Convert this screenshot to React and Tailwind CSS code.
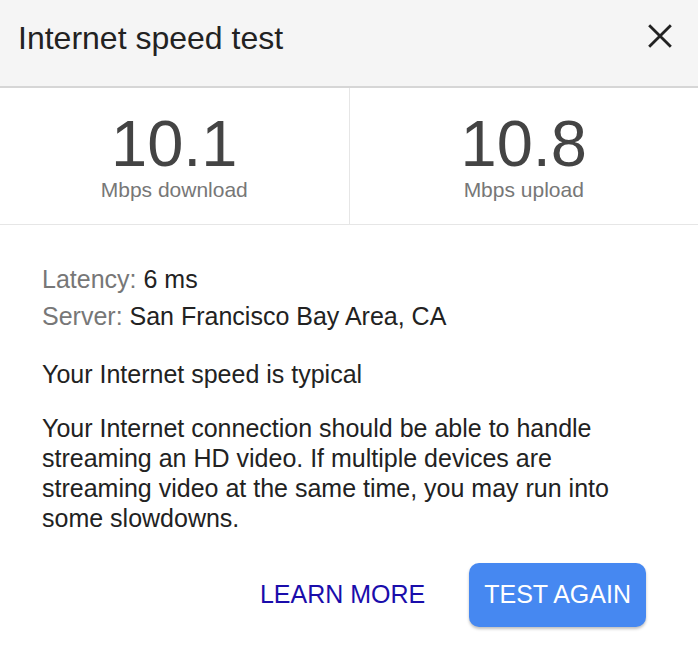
import React from 'react';

const Stat = ({ value, label, border }) => (
  <div className={`flex-1 flex flex-col items-center pt-[22px] ${border ? 'border-r border-[#e6e6e6]' : ''}`}>
    <div className="text-[65px] leading-[68px] text-[#444]">{value}</div>
    <div className="text-[21px] leading-[24px] text-[#777]">{label}</div>
  </div>
);

export default function App() {
  return (
    <div className="w-[698px] h-[660px] bg-white font-['Liberation_Sans',Arial,sans-serif] text-[#222]">
      <div className="h-[88px] bg-[#f5f5f5] border-b-2 border-[#d6d6d6] flex items-start justify-between pl-[18px] pr-[25px] pt-[19px]">
        <h1 className="text-[32px] leading-[38px] text-[#222]">Internet speed test</h1>
        <button className="mt-[4px] text-[#222]">
          <svg width="26" height="26" viewBox="0 0 24 24" fill="none" stroke="currentColor" strokeWidth="2.6" strokeLinecap="butt">
            <path d="M2 2L22 22M22 2L2 22" />
          </svg>
        </button>
      </div>
      <div className="flex h-[137px] border-b border-[#e6e6e6]">
        <Stat value="10.1" label="Mbps download" border />
        <Stat value="10.8" label="Mbps upload" />
      </div>
      <div className="px-[42px] pt-[36px] text-[25px]">
        <div className="leading-[37px]">
          <div><span className="text-[#777]">Latency:</span> 6 ms</div>
          <div><span className="text-[#777]">Server:</span> San Francisco Bay Area, CA</div>
        </div>
        <p className="mt-[24px] leading-[30px]">Your Internet speed is typical</p>
        <p className="mt-[24px] leading-[30px] w-[600px]">
          Your Internet connection should be able to handle streaming an HD video. If multiple devices are streaming video at the same time, you may run into some slowdowns.
        </p>
        <div className="flex justify-end items-center gap-[44px] mt-[30px] pr-[10px]">
          <button className="text-[25px] text-[#1a0dab]">LEARN MORE</button>
          <button className="h-[64px] px-[15px] rounded-[10px] bg-[#4688f1] text-white text-[25px] shadow-[0_2px_3px_rgba(0,0,0,0.25)]">TEST AGAIN</button>
        </div>
      </div>
    </div>
  );
}
